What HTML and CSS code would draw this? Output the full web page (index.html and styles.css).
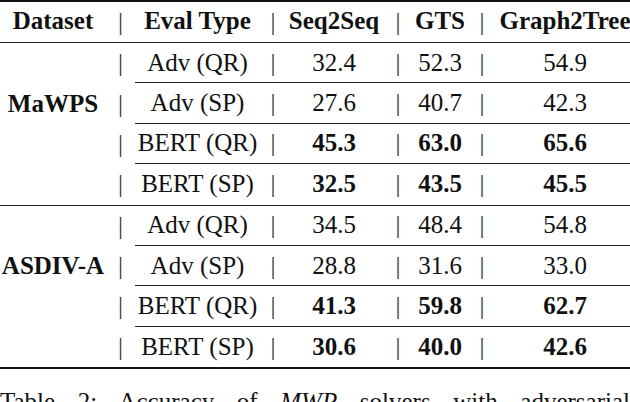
FILE: index.html
```html
<!DOCTYPE html>
<html>
<head>
<meta charset="utf-8">
<link rel="stylesheet" href="styles.css">
</head>
<body>
<div class="table">
  <div class="row head">
    <div class="left"><span class="cell">Dataset</span><span class="bar">|</span></div>
    <div class="right"><span class="cell">Eval Type</span><span class="bar">|</span><span class="cell">Seq2Seq</span><span class="bar">|</span><span class="cell">GTS</span><span class="bar">|</span><span class="cell">Graph2Tree</span></div>
  </div>
  <div class="group">
    <div class="row sub">
      <div class="left"><span class="cell"></span><span class="bar">|</span></div>
      <div class="right"><span class="cell">Adv (QR)</span><span class="bar">|</span><span class="cell">32.4</span><span class="bar">|</span><span class="cell">52.3</span><span class="bar">|</span><span class="cell">54.9</span></div>
    </div>
    <div class="row sub">
      <div class="left"><span class="cell name">MaWPS</span><span class="bar">|</span></div>
      <div class="right"><span class="cell">Adv (SP)</span><span class="bar">|</span><span class="cell">27.6</span><span class="bar">|</span><span class="cell">40.7</span><span class="bar">|</span><span class="cell">42.3</span></div>
    </div>
    <div class="row sub best">
      <div class="left"><span class="cell"></span><span class="bar">|</span></div>
      <div class="right"><span class="cell">BERT (QR)</span><span class="bar">|</span><span class="cell">45.3</span><span class="bar">|</span><span class="cell">63.0</span><span class="bar">|</span><span class="cell">65.6</span></div>
    </div>
    <div class="row best">
      <div class="left"><span class="cell"></span><span class="bar">|</span></div>
      <div class="right"><span class="cell">BERT (SP)</span><span class="bar">|</span><span class="cell">32.5</span><span class="bar">|</span><span class="cell">43.5</span><span class="bar">|</span><span class="cell">45.5</span></div>
    </div>
  </div>
  <div class="group last">
    <div class="row sub">
      <div class="left"><span class="cell"></span><span class="bar">|</span></div>
      <div class="right"><span class="cell">Adv (QR)</span><span class="bar">|</span><span class="cell">34.5</span><span class="bar">|</span><span class="cell">48.4</span><span class="bar">|</span><span class="cell">54.8</span></div>
    </div>
    <div class="row sub">
      <div class="left"><span class="cell name">ASDIV-A</span><span class="bar">|</span></div>
      <div class="right"><span class="cell">Adv (SP)</span><span class="bar">|</span><span class="cell">28.8</span><span class="bar">|</span><span class="cell">31.6</span><span class="bar">|</span><span class="cell">33.0</span></div>
    </div>
    <div class="row sub best">
      <div class="left"><span class="cell"></span><span class="bar">|</span></div>
      <div class="right"><span class="cell">BERT (QR)</span><span class="bar">|</span><span class="cell">41.3</span><span class="bar">|</span><span class="cell">59.8</span><span class="bar">|</span><span class="cell">62.7</span></div>
    </div>
    <div class="row best">
      <div class="left"><span class="cell"></span><span class="bar">|</span></div>
      <div class="right"><span class="cell">BERT (SP)</span><span class="bar">|</span><span class="cell">30.6</span><span class="bar">|</span><span class="cell">40.0</span><span class="bar">|</span><span class="cell">42.6</span></div>
    </div>
  </div>
</div>
<p class="caption">Table 2: Accuracy of <i>MWP</i> solvers with adversarial</p>
</body>
</html>
```

FILE: styles.css
```css
html, body {
  margin: 0;
  padding: 0;
  background: #fff;
}
body {
  width: 630px;
  height: 402px;
  overflow: hidden;
  font-family: "Liberation Serif", Tinos, "Nimbus Roman", "Nimbus Roman No9 L", "Times New Roman", Times, "DejaVu Serif", serif;
  font-size: 25px;
  color: #111;
}
.table {
  width: 630px;
  border-top: 2px solid #111;
  border-bottom: 2px solid #111;
}
.row {
  display: flex;
  height: 40.375px;
}
.row.head {
  height: 41px;
  border-bottom: 1px solid #222;
  box-sizing: border-box;
  font-weight: bold;
}
.row.head .cell {
  padding-bottom: 3px;
}
.left {
  display: grid;
  grid-template-columns: 106px 29px;
  align-items: center;
  flex: 0 0 135px;
}
.right {
  display: grid;
  grid-template-columns: 125px 26px 96px 32px 52px 32px 134px;
  align-items: center;
  flex: 0 0 497px;
  box-sizing: border-box;
}
.row.sub .right {
  border-bottom: 1px solid #222;
}
.group {
  border-bottom: 1px solid #222;
}
.group.last {
  border-bottom: none;
}
.cell {
  text-align: center;
  white-space: nowrap;
}
.name {
  font-weight: bold;
}
.bar {
  text-align: center;
  font-weight: normal;
  color: #333;
}
.best .right .cell:nth-child(n+3) {
  font-weight: bold;
}
.caption {
  margin: 19px 0 0 0;
  width: 630px;
  white-space: nowrap;
  text-align: justify;
  text-align-last: justify;
  word-spacing: 14px;
}
```
